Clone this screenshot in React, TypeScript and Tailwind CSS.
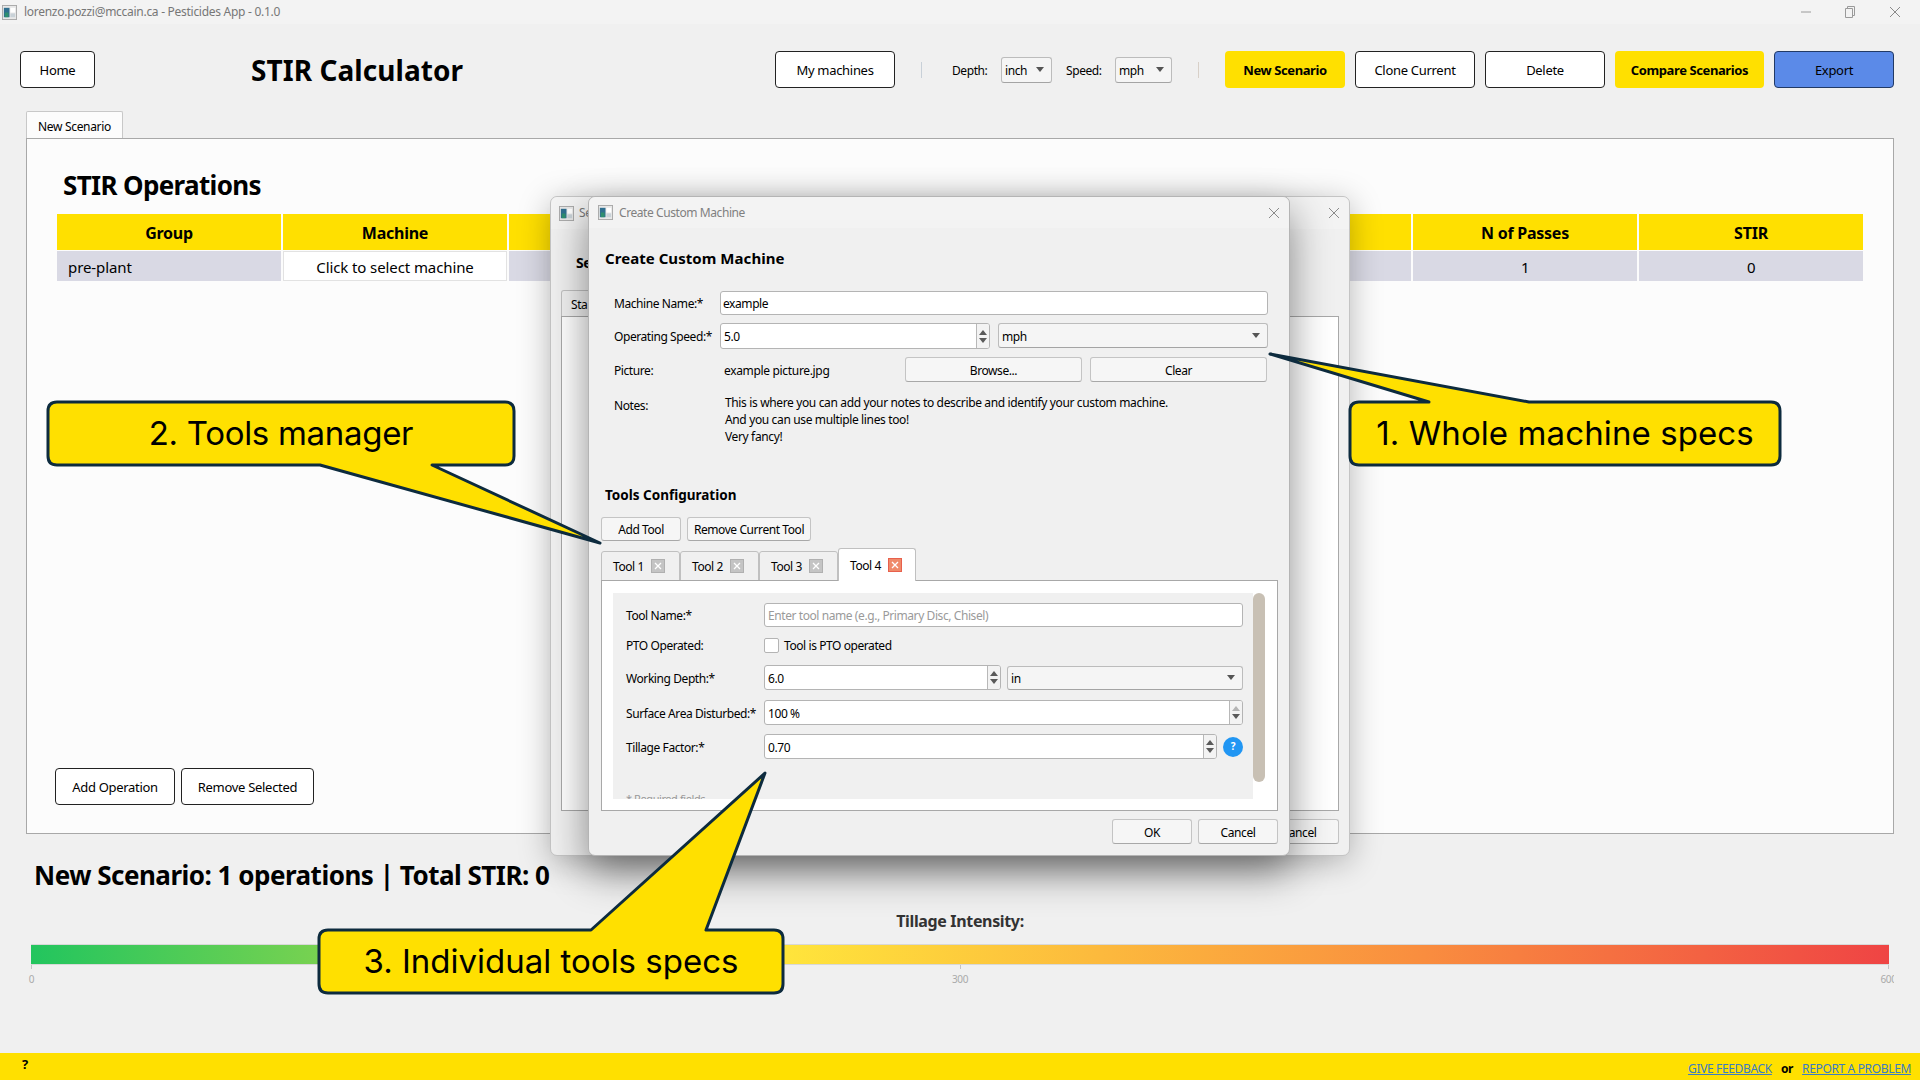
import React from "react";

function WinIcon({ className }: { className: string }) {
  return (
    <svg viewBox="0 0 16 16" className={className}>
      <rect x="0.5" y="0.5" width="15" height="15" fill="#e8e8e8" stroke="#a8a8a8" />
      <rect x="2" y="3" width="6" height="10" fill="#2f6f8f" />
      <rect x="3" y="8" width="4" height="5" fill="#2f8f6f" />
      <rect x="9" y="3" width="5" height="5" fill="#ffffff" />
      <rect x="9" y="9" width="5" height="4" fill="#c9d2d8" />
    </svg>
  );
}

function CloseX({ className, color }: { className: string; color: string }) {
  return (
    <svg viewBox="0 0 12 12" className={className}>
      <path d="M1 1 L11 11 M11 1 L1 11" stroke={color} strokeWidth="1" fill="none" />
    </svg>
  );
}

function DarkBtn({ w, children, className }: { w: string; children: React.ReactNode; className?: string }) {
  return (
    <div className={`flex h-[37px] shrink-0 items-center justify-center rounded-[4px] border border-[#222222] bg-white pt-[2px] text-[13px] tracking-[-0.3px] text-black ${w} ${className ?? ""}`}>
      {children}
    </div>
  );
}

function YellowBtn({ w, children, className }: { w: string; children: React.ReactNode; className?: string }) {
  return (
    <div className={`flex h-[37px] shrink-0 items-center justify-center rounded-[4px] bg-[#ffe000] pt-[2px] text-[13px] font-bold tracking-[-0.4px] text-black ${w} ${className ?? ""}`}>
      {children}
    </div>
  );
}

function QtBtn({ w, h, children, className }: { w: string; h: string; children: React.ReactNode; className?: string }) {
  return (
    <div className={`flex shrink-0 items-center justify-center rounded-[3px] border border-[#c4c4c4] border-b-[#a8a8a8] bg-[#f6f6f6] pt-[2px] text-[12px] text-black ${w} ${h} ${className ?? ""}`}>
      {children}
    </div>
  );
}

function Caret({ className }: { className?: string }) {
  return (
    <svg viewBox="0 0 8 5" className={`h-[5px] w-[8px] ${className ?? ""}`}>
      <path d="M0 0 H8 L4 5 Z" fill="#555555" />
    </svg>
  );
}

function Spinner({ light }: { light?: boolean }) {
  return (
    <div className="flex h-full w-[13px] shrink-0 flex-col items-center justify-center gap-[3px] border-l border-[#b8b8b8] bg-[#f3f3f3]">
      <svg viewBox="0 0 8 5" className="h-[5px] w-[8px]">
        <path d="M4 0 L8 5 H0 Z" fill={light ? "#b4b4b4" : "#5a5a5a"} />
      </svg>
      <svg viewBox="0 0 8 5" className="h-[5px] w-[8px]">
        <path d="M0 0 H8 L4 5 Z" fill="#5a5a5a" />
      </svg>
    </div>
  );
}

function SpinInput({ w, value, light, h }: { w: string; value: string; light?: boolean; h?: string }) {
  return (
    <div className={`flex items-center overflow-hidden rounded-[3px] border border-[#b4b4b4] bg-white text-[12px] text-black ${h ?? "h-[25px]"} ${w}`}>
      <span className="flex-1 pl-[3px] pt-[2px]">{value}</span>
      <Spinner light={light} />
    </div>
  );
}

function Combo({ w, h, text }: { w: string; h: string; text: string }) {
  return (
    <div className={`flex items-center justify-between rounded-[3px] border border-[#bcbcbc] border-b-[#a4a4a4] bg-[#f5f5f5] pl-[3px] pr-[7px] text-[12px] text-black ${w} ${h}`}>
      <span className="pt-[2px]">{text}</span>
      <Caret />
    </div>
  );
}

function TabClose({ active }: { active?: boolean }) {
  return (
    <span className={`flex h-[14px] w-[14px] items-center justify-center border ${active ? "border-[#e8604c] bg-[#ef8a6a]" : "border-[#b0b0b0] bg-[#c4c4c4]"}`}>
      <svg viewBox="0 0 8 8" className="h-[8px] w-[8px]">
        <path d="M1 1 L7 7 M7 1 L1 7" stroke="#ffffff" strokeWidth="1.3" fill="none" />
      </svg>
    </span>
  );
}

function ToolTab({ label, active, w }: { label: string; active?: boolean; w: string }) {
  if (active) {
    return (
      <div className={`relative z-10 flex h-[33px] items-center gap-[7px] rounded-t-[3px] border border-b-0 border-[#c0c0c0] bg-white pl-[11px] text-[12px] text-black ${w}`}>
        <span className="pt-[1px]">{label}</span>
        <TabClose active />
      </div>
    );
  }
  return (
    <div className={`flex h-[30px] items-center gap-[7px] rounded-t-[3px] border border-[#c0c0c0] bg-[#f0f0f0] pl-[11px] text-[12px] text-black ${w}`}>
      <span className="pt-[2px]">{label}</span>
      <TabClose />
    </div>
  );
}

function FormRow({ label, children, className }: { label: string; children: React.ReactNode; className?: string }) {
  return (
    <div className={`flex items-center ${className ?? ""}`}>
      <span className="w-[138px] shrink-0 whitespace-nowrap pt-[2px] text-[12px] text-black">{label}</span>
      {children}
    </div>
  );
}

const tableHeads = ["Group", "Machine", "", "", "", "", "N of Passes", "STIR"];

export default function App() {
  return (
    <div className="relative flex h-[1080px] w-[1920px] flex-col overflow-hidden bg-[#f0f0f0] font-['Noto_Sans','Open_Sans',sans-serif] tracking-[-0.42px] text-black">
      {/* Title bar */}
      <div className="flex h-[24px] shrink-0 items-center bg-[#f3f3f3] pl-[2px] pr-[19px]">
        <WinIcon className="h-[15px] w-[15px]" />
        <span className="ml-[7px] text-[12px] tracking-[-0.28px] text-[#777777]">lorenzo.pozzi@mccain.ca - Pesticides App - 0.1.0</span>
        <div className="ml-auto flex items-center gap-[34px]">
          <svg viewBox="0 0 10 10" className="h-[10px] w-[10px]"><path d="M0 5 H10" stroke="#9a9a9a" strokeWidth="1" /></svg>
          <svg viewBox="0 0 10 12" className="h-[12px] w-[10px]"><path d="M0.5 2.5 H7.5 V11.5 H0.5 Z M2.5 2.5 V0.5 H9.5 V9.5 H7.5" stroke="#9a9a9a" strokeWidth="1" fill="none" /></svg>
          <CloseX className="h-[12px] w-[12px]" color="#8a8a8a" />
        </div>
      </div>

      {/* Toolbar */}
      <div className="mt-[27px] flex h-[37px] shrink-0 items-center pl-[20px] pr-[26px]">
        <DarkBtn w="w-[75px]">Home</DarkBtn>
        <span className="ml-[156px] whitespace-nowrap text-[28px] font-bold tracking-[0.07px]">STIR Calculator</span>
        <DarkBtn w="w-[120px]" className="ml-auto">My machines</DarkBtn>
        <div className="ml-[26px] h-[16px] w-px bg-[#c8d0d8]" />
        <span className="ml-[30px] w-[49px] pt-[2px] text-[12px]">Depth:</span>
        <Combo w="w-[51px]" h="h-[26px]" text="inch" />
        <span className="ml-[14px] w-[49px] pt-[2px] text-[12px]">Speed:</span>
        <Combo w="w-[57px]" h="h-[26px]" text="mph" />
        <div className="ml-[26px] h-[16px] w-px bg-[#d8d0c8]" />
        <YellowBtn w="w-[120px]" className="ml-[26px]">New Scenario</YellowBtn>
        <DarkBtn w="w-[120px]" className="ml-[10px]">Clone Current</DarkBtn>
        <DarkBtn w="w-[120px]" className="ml-[10px]">Delete</DarkBtn>
        <YellowBtn w="w-[149px]" className="ml-[10px]">Compare Scenarios</YellowBtn>
        <div className="ml-[10px] flex h-[37px] w-[120px] shrink-0 items-center justify-center rounded-[4px] border border-[#223a66] bg-[#5b8ae8] pt-[2px] text-[13px] tracking-[-0.3px] text-black">Export</div>
      </div>

      {/* Tab */}
      <div className="ml-[26px] mt-[23px] flex h-[28px] w-[97px] shrink-0 items-center justify-center rounded-t-[2px] border border-b-0 border-[#c8c8c8] bg-[#fcfcfc] pt-[2px] text-[12px] tracking-[-0.33px]">New Scenario</div>

      {/* Pane */}
      <div className="-mt-px mx-[26px] flex h-[696px] shrink-0 flex-col border border-[#a8a8a8] bg-[#fcfcfc] px-[30px]">
        <div className="mt-[28px] pl-[6px] text-[26px] font-bold leading-[36px] tracking-[-0.65px]">STIR Operations</div>
        <div className="mt-[11px] grid grid-cols-8 gap-x-[2px]">
          {tableHeads.map((h, i) => (
            <div key={i} className="flex h-[36px] items-center justify-center bg-[#ffe000] pt-[2px] text-[16px] font-bold tracking-[-0.25px]">{h}</div>
          ))}
        </div>
        <div className="mt-px grid grid-cols-8 gap-x-[2px]">
          <div className="flex h-[30px] items-center bg-[#d9d9e4] pl-[11px] pt-[2px] text-[15px] tracking-[-0.1px]">pre-plant</div>
          <div className="flex h-[30px] items-center justify-center border border-[#e2e2e2] bg-white pt-[2px] text-[15px] tracking-[-0.1px]">Click to select machine</div>
          <div className="h-[30px] bg-[#d9d9e4]" />
          <div className="h-[30px] bg-[#d9d9e4]" />
          <div className="h-[30px] bg-[#d9d9e4]" />
          <div className="h-[30px] bg-[#d9d9e4]" />
          <div className="flex h-[30px] items-center justify-center bg-[#d9d9e4] pt-[2px] text-[15px]">1</div>
          <div className="flex h-[30px] items-center justify-center bg-[#d9d9e4] pt-[2px] text-[15px]">0</div>
        </div>
        <div className="-ml-[2px] mb-[28px] mt-auto flex gap-[6px]">
          <DarkBtn w="w-[120px]">Add Operation</DarkBtn>
          <DarkBtn w="w-[133px]">Remove Selected</DarkBtn>
        </div>
      </div>

      {/* Summary */}
      <div className="ml-[34px] mt-[25px] h-[32px] shrink-0 whitespace-nowrap text-[26px] font-bold leading-[32px] tracking-[-0.5px]">New Scenario: 1 operations | Total STIR: 0</div>
      <div className="mt-[20px] h-[20px] shrink-0 text-center text-[16px] font-bold leading-[20px] tracking-[-0.35px] text-[#333333]">Tillage Intensity:</div>

      {/* Intensity bar */}
      <div className="mx-[26px] mt-[13px] shrink-0 overflow-hidden px-[5px]">
        <div className="h-[21px] border-y border-[#d8d8d8] bg-[linear-gradient(to_right,#22c55e,#ffe63b_40%,#f98d3f_75%,#ef4444)]" />
        <div className="flex justify-between">
          {["0", "300", "600"].map((t) => (
            <div key={t} className="flex w-px flex-col items-center">
              <div className="h-[4px] w-px bg-[#c4c4c4]" />
              <span className="mt-[3px] whitespace-nowrap text-[10px] leading-[14px] text-[#aaaaaa]">{t}</span>
            </div>
          ))}
        </div>
      </div>

      {/* Footer */}
      <div className="mt-auto flex h-[27px] shrink-0 items-center bg-[#ffe000] pl-[22px] pr-[9px]">
        <span className="-mt-[4px] text-[13px] font-bold">?</span>
        <div className="ml-auto flex items-center gap-[9px] pt-[4px] text-[12px] tracking-[-0.35px]">
          <span className="text-[#3b7cc4] underline">GIVE FEEDBACK</span>
          <span className="font-bold">or</span>
          <span className="text-[#3b7cc4] underline">REPORT A PROBLEM</span>
        </div>
      </div>

      {/* Back dialog */}
      <div className="absolute left-[550px] top-[196px] flex h-[660px] w-[800px] flex-col rounded-[7px] border border-[#c4c4c4] bg-[#f0f0f0] shadow-[0_6px_32px_rgba(0,0,0,0.28)]">
        <div className="flex h-[32px] shrink-0 items-center justify-between rounded-t-[7px] bg-[#f3f3f3] pl-[8px] pr-[9px] text-[12px] text-[#777777]">
          <div className="flex items-center gap-[5px]">
            <WinIcon className="h-[15px] w-[15px]" />
            <span>Se</span>
          </div>
          <CloseX className="h-[12px] w-[12px]" color="#8a8a8a" />
        </div>
        <div className="ml-[25px] mt-[24px] text-[14px] font-bold leading-[20px]">Se</div>
        <div className="ml-[10px] mt-[17px] flex h-[26px] w-[40px] items-center rounded-t-[3px] border border-b-0 border-[#c0c0c0] bg-[#f0f0f0] pl-[9px] pt-[2px] text-[12px]">Sta</div>
        <div className="mx-[10px] h-[495px] border border-[#a8a8a8] bg-white" />
        <div className="mr-[10px] mt-[8px] flex justify-end">
          <QtBtn w="w-[80px]" h="h-[25px]">Cancel</QtBtn>
        </div>
      </div>

      {/* Front dialog */}
      <div className="absolute left-[588px] top-[196px] flex h-[660px] w-[702px] flex-col rounded-[7px] border border-[#b4b4b4] bg-[#f0f0f0] shadow-[0_16px_40px_rgba(0,0,0,0.45)]">
        <div className="flex h-[31px] shrink-0 items-center justify-between rounded-t-[7px] bg-[#f3f3f3] pl-[9px] pr-[9px] text-[12px] text-[#808080]">
          <div className="flex items-center gap-[6px]">
            <WinIcon className="h-[15px] w-[15px]" />
            <span>Create Custom Machine</span>
          </div>
          <CloseX className="h-[12px] w-[12px]" color="#8a8a8a" />
        </div>
        <div className="ml-[16px] mt-[20px] h-[20px] text-[15px] font-bold leading-[20px] tracking-[0.05px]">Create Custom Machine</div>

        <div className="mt-[23px] flex items-center pl-[25px] pr-[21px]">
          <span className="w-[106px] shrink-0 pt-[2px] text-[12px]">Machine Name:*</span>
          <div className="flex h-[24px] flex-1 items-center rounded-[3px] border border-[#b4b4b4] bg-white pl-[2px] pt-[2px] text-[12px]">example</div>
        </div>
        <div className="mt-[8px] flex items-center pl-[25px] pr-[21px]">
          <span className="w-[106px] shrink-0 pt-[2px] text-[12px]">Operating Speed:*</span>
          <SpinInput w="w-[270px]" h="h-[26px]" value="5.0" />
          <div className="ml-[8px] flex-1 self-start">
            <Combo w="w-full" h="h-[25px]" text="mph" />
          </div>
        </div>
        <div className="mt-[8px] flex items-center pl-[25px] pr-[21px]">
          <span className="w-[110px] shrink-0 pt-[2px] text-[12px]">Picture:</span>
          <span className="w-[181px] shrink-0 pt-[2px] text-[12px] tracking-[-0.33px]">example picture.jpg</span>
          <QtBtn w="w-[177px]" h="h-[25px]">Browse...</QtBtn>
          <QtBtn w="w-[177px]" h="h-[25px]" className="ml-[8px]">Clear</QtBtn>
        </div>
        <div className="mt-[12px] flex h-[75px] items-start pl-[25px] pr-[21px]">
          <span className="mt-[3px] w-[111px] shrink-0 text-[12px]">Notes:</span>
          <div className="text-[12px] leading-[17px] tracking-[-0.36px]">
            <div>This is where you can add your notes to describe and identify your custom machine.</div>
            <div>And you can use multiple lines too!</div>
            <div>Very fancy!</div>
          </div>
        </div>
        <div className="ml-[16px] mt-[16px] h-[20px] text-[13.5px] font-bold leading-[20px] tracking-[0px]">Tools Configuration</div>
        <div className="ml-[12px] mt-[12px] flex gap-[6px]">
          <QtBtn w="w-[80px]" h="h-[24px]">Add Tool</QtBtn>
          <QtBtn w="w-[124px]" h="h-[24px]">Remove Current Tool</QtBtn>
        </div>
        <div className="ml-[12px] mt-[7px] flex h-[33px] items-end">
          <ToolTab label="Tool 1" w="w-[79px]" />
          <ToolTab label="Tool 2" w="w-[79px]" />
          <ToolTab label="Tool 3" w="w-[79px]" />
          <ToolTab label="Tool 4" active w="w-[78px]" />
        </div>
        <div className="ml-[12px] mr-[11px] -mt-px flex h-[231px] border border-[#a8a8a8] bg-white pl-[11px] pt-[12px]">
          <div className="h-[206px] w-[640px] overflow-hidden bg-[#f0f0f0] pl-[13px] pr-[10px] pt-[10px]">
            <FormRow label="Tool Name:*">
              <div className="flex h-[24px] flex-1 items-center rounded-[3px] border border-[#b4b4b4] bg-white pl-[3px] pt-[2px] text-[12px] text-[#9a9a9a]">Enter tool name (e.g., Primary Disc, Chisel)</div>
            </FormRow>
            <FormRow label="PTO Operated:" className="mt-[10px] h-[16px]">
              <span className="h-[15px] w-[15px] rounded-[2px] border border-[#b4b4b4] bg-white" />
              <span className="ml-[5px] pt-[2px] text-[12px]">Tool is PTO operated</span>
            </FormRow>
            <FormRow label="Working Depth:*" className="mt-[12px]">
              <SpinInput w="w-[237px]" value="6.0" />
              <div className="ml-[6px] flex-1">
                <Combo w="w-full" h="h-[24px]" text="in" />
              </div>
            </FormRow>
            <FormRow label="Surface Area Disturbed:*" className="mt-[10px]">
              <SpinInput w="w-[479px]" value="100 %" light />
            </FormRow>
            <FormRow label="Tillage Factor:*" className="mt-[9px]">
              <SpinInput w="w-[454px]" value="0.70" />
              <span className="ml-[6px] flex h-[20px] w-[20px] items-center justify-center rounded-full bg-[#2196f3] text-[10px] font-bold text-white">?</span>
            </FormRow>
            <div className="mt-[33px] text-[11px] leading-[14px] text-[#999999]">* Required fields</div>
          </div>
          <div className="h-[189px] w-[12px] rounded-full bg-[#c8c0b4]" />
        </div>
        <div className="mr-[11px] mt-[8px] flex justify-end gap-[6px]">
          <QtBtn w="w-[80px]" h="h-[25px]">OK</QtBtn>
          <QtBtn w="w-[80px]" h="h-[25px]">Cancel</QtBtn>
        </div>
      </div>

      {/* Callouts */}
      <svg viewBox="0 0 1920 1080" className="pointer-events-none absolute inset-0 h-[1080px] w-[1920px]">
        <path d="M1359 402 H1429 L1270 354 L1529 402 H1771 Q1780 402 1780 411 V456 Q1780 465 1771 465 H1359 Q1350 465 1350 456 V411 Q1350 402 1359 402 Z" fill="#ffe000" stroke="#0d2b3e" strokeWidth="3" strokeLinejoin="round" />
        <path d="M57 402 H505 Q514 402 514 411 V456 Q514 465 505 465 H432 L600 543 L320 465 H57 Q48 465 48 456 V411 Q48 402 57 402 Z" fill="#ffe000" stroke="#0d2b3e" strokeWidth="3" strokeLinejoin="round" />
        <path d="M328 930 H591 L765 773 L706 930 H774 Q783 930 783 939 V984 Q783 993 774 993 H328 Q319 993 319 984 V939 Q319 930 328 930 Z" fill="#ffe000" stroke="#0d2b3e" strokeWidth="3" strokeLinejoin="round" />
      </svg>
      <div className="absolute left-[1350px] top-[402px] flex h-[63px] w-[430px] items-center justify-center whitespace-nowrap font-['Inter',sans-serif] text-[33px] tracking-[0.1px] text-black">1. Whole machine specs</div>
      <div className="absolute left-[48px] top-[402px] flex h-[63px] w-[466px] items-center justify-center whitespace-nowrap font-['Inter',sans-serif] text-[33px] tracking-[-0.3px] text-black">2. Tools manager</div>
      <div className="absolute left-[319px] top-[930px] flex h-[63px] w-[464px] items-center justify-center whitespace-nowrap font-['Inter',sans-serif] text-[33px] tracking-[0px] text-black">3. Individual tools specs</div>
    </div>
  );
}
